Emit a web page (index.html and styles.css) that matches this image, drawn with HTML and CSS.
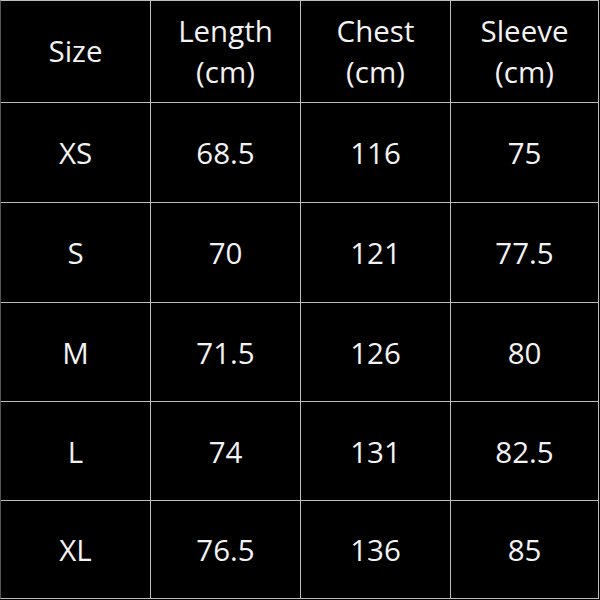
FILE: index.html
```html
<!DOCTYPE html>
<html>
<head>
<meta charset="utf-8">
<link rel="stylesheet" href="styles.css">
</head>
<body>
<div class="chart">
  <div class="cell head">Size</div>
  <div class="cell head">Length<br>(cm)</div>
  <div class="cell head">Chest<br>(cm)</div>
  <div class="cell head">Sleeve<br>(cm)</div>

  <div class="cell">XS</div><div class="cell">68.5</div><div class="cell">116</div><div class="cell">75</div>
  <div class="cell">S</div><div class="cell">70</div><div class="cell">121</div><div class="cell">77.5</div>
  <div class="cell">M</div><div class="cell">71.5</div><div class="cell">126</div><div class="cell">80</div>
  <div class="cell">L</div><div class="cell">74</div><div class="cell">131</div><div class="cell">82.5</div>
  <div class="cell">XL</div><div class="cell">76.5</div><div class="cell">136</div><div class="cell">85</div>
</div>
</body>
</html>
```

FILE: styles.css
```css
html, body {
  margin: 0;
  padding: 0;
  background: #000;
}

.chart {
  width: 597px;
  height: 597px;
  display: grid;
  grid-template-columns: 149px 149px 149px 147px;
  grid-template-rows: 101px 99px 99px 98px 98px 97px;
  gap: 1px;
  background: #bdbdbd;
  border: 1px solid #bdbdbd;
  border-left-color: #555;
  box-sizing: content-box;
}

.cell {
  background: #000;
  color: #f2f2f2;
  font-family: "Open Sans", "DejaVu Sans", sans-serif;
  font-size: 29.5px;
  line-height: 41px;
  display: flex;
  align-items: center;
  justify-content: center;
  text-align: center;
}

.head {
  padding-bottom: 2px;
}
```
